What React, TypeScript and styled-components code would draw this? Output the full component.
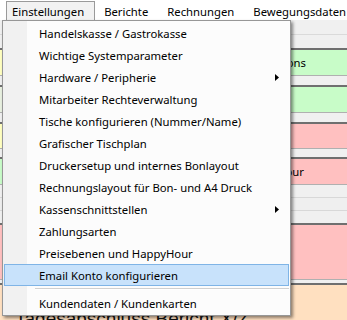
import React from "react";
import styled, { createGlobalStyle } from "styled-components";

const Global = createGlobalStyle`
  html, body { margin: 0; padding: 0; background: #f0f0f0; }
  body { width: 347px; height: 320px; overflow: hidden; }
  * { box-sizing: border-box; }
`;

const FONT = `"Noto Sans", "Open Sans", "DejaVu Sans", sans-serif`;

const Page = styled.div`
  position: relative;
  width: 347px;
  height: 320px;
  overflow: hidden;
  background: #f0f0f0;
  font-family: ${FONT};
  font-size: 11.3px;
  color: #000;
`;

const MenuBar = styled.div`
  display: flex;
  align-items: stretch;
  height: 20px;
  background: #ffffff;
  padding-left: 6px;
`;

const BarItem = styled.div<{ $active?: boolean; $pl: number; $pr: number }>`
  display: flex;
  align-items: center;
  padding: 0 ${(p) => p.$pr}px 0 ${(p) => p.$pl}px;
  margin-top: 1px;
  white-space: nowrap;
  border: 1px solid ${(p) => (p.$active ? "#9a9a9a" : "transparent")};
  border-bottom: none;
  background: ${(p) => (p.$active ? "#f2f2f2" : "transparent")};
`;

const Header = styled.div`
  height: 28px;
  background: #f0f0f0;
  border-top: 1px solid #f0f0f0;
`;

const HeaderLine = styled.div`
  margin-top: 13px;
  height: 1px;
  background: #dadada;
`;

const Row = styled.div<{ $gap: number; $h: number; $light?: boolean }>`
  display: flex;
  margin-top: ${(p) => p.$gap}px;
  height: ${(p) => p.$h}px;
  border-top: ${(p) => (p.$light ? "1px solid #d8d8d8" : "2px solid #6f6f6f")};
  border-bottom: 1px solid ${(p) => (p.$light ? "#d8d8d8" : "#b0b0b0")};
`;

const Strip = styled.div<{ $c: string }>`
  width: 3px;
  flex: none;
  background: ${(p) => p.$c};
`;

const Cell = styled.div<{ $c: string }>`
  flex: 1;
  display: flex;
  background: ${(p) => p.$c};
`;

const Label = styled.div<{ $w: number }>`
  width: ${(p) => p.$w}px;
  display: flex;
  align-items: center;
  justify-content: flex-end;
  white-space: nowrap;
`;

const BigText = styled.div`
  padding: 24px 0 0 12px;
  font-family: "Liberation Sans", Arial, sans-serif;
  font-size: 19px;
  line-height: 20px;
  white-space: nowrap;
  color: #111;
`;

const Menu = styled.div`
  position: absolute;
  left: 2px;
  top: 20px;
  width: 289px;
  padding: 1px 1px;
  border: 1px solid #979797;
  background: linear-gradient(to right, #f1f1f1 0 24px, #fcfcfc 24px);
  box-shadow: 2px 2px 3px rgba(0, 0, 0, 0.45);
`;

const Item = styled.div<{ $hot?: boolean }>`
  position: relative;
  height: 22px;
  display: flex;
  align-items: center;
  padding-left: 34px;
  white-space: nowrap;
  border: 1px solid ${(p) => (p.$hot ? "#7fb4e6" : "transparent")};
  background: ${(p) => (p.$hot ? "#c8e2fb" : "transparent")};
`;

const Arrow = styled.svg`
  position: absolute;
  right: 9px;
  top: 7px;
`;

const Separator = styled.div`
  height: 6px;
  display: flex;
  align-items: center;
  padding-left: 31px;
  &::after {
    content: "";
    flex: 1;
    height: 1px;
    background: #d0d0d0;
    border-bottom: 1px solid #ffffff;
    box-sizing: content-box;
  }
`;

const items: { label: string; sub?: boolean; hot?: boolean; sepBefore?: boolean }[] = [
  { label: "Handelskasse / Gastrokasse" },
  { label: "Wichtige Systemparameter" },
  { label: "Hardware / Peripherie", sub: true },
  { label: "Mitarbeiter Rechteverwaltung" },
  { label: "Tische konfigurieren (Nummer/Name)" },
  { label: "Grafischer Tischplan" },
  { label: "Druckersetup und internes Bonlayout" },
  { label: "Rechnungslayout für Bon- und A4 Druck" },
  { label: "Kassenschnittstellen", sub: true },
  { label: "Zahlungsarten" },
  { label: "Preisebenen und HappyHour" },
  { label: "Email Konto konfigurieren", hot: true },
  { label: "Kundendaten / Kundenkarten", sepBefore: true },
];

export default function App() {
  return (
    <Page>
      <Global />
      <MenuBar>
        <BarItem $active $pl={5} $pr={10}>Einstellungen</BarItem>
        <BarItem $pl={8} $pr={9}>Berichte</BarItem>
        <BarItem $pl={8} $pr={9}>Rechnungen</BarItem>
        <BarItem $pl={8} $pr={9}>Bewegungsdaten</BarItem>
      </MenuBar>
      <Header>
        <HeaderLine />
      </Header>
      <Row $gap={0} $h={28}>
        <Strip $c="#ffffc0" />
        <Cell $c="#c8fcc8">
          <Label $w={303}>Favoriten Buttons</Label>
        </Cell>
      </Row>
      <Row $gap={9} $h={28}>
        <Strip $c="#e8f0e0" />
        <Cell $c="#c8fcc8" />
      </Row>
      <Row $gap={9} $h={27}>
        <Strip $c="#ffffc0" />
        <Cell $c="#ffc0c0" />
      </Row>
      <Row $gap={8} $h={28}>
        <Strip $c="#c8fcc8" />
        <Cell $c="#ffc0c0">
          <Label $w={301}>Happy Hour</Label>
        </Cell>
      </Row>
      <Row $gap={12} $h={14} $light>
        <Strip $c="#eeeeee" />
        <Cell $c="#efefef" />
      </Row>
      <Row $gap={12} $h={57}>
        <Strip $c="#ffc0c0" />
        <Cell $c="#ffc0c0" />
      </Row>
      <Row $gap={3} $h={60}>
        <Strip $c="#ffe0c0" />
        <Cell $c="#ffe0c0">
          <BigText>Tagesabschluss Bericht X/Z</BigText>
        </Cell>
      </Row>

      <Menu>
        {items.map((it) => (
          <React.Fragment key={it.label}>
            {it.sepBefore && <Separator />}
            <Item $hot={it.hot}>
              {it.label}
              {it.sub && (
                <Arrow width="4" height="7" viewBox="0 0 4 7">
                  <polygon points="0,0 4,3.5 0,7" fill="#000" />
                </Arrow>
              )}
            </Item>
          </React.Fragment>
        ))}
      </Menu>
    </Page>
  );
}
